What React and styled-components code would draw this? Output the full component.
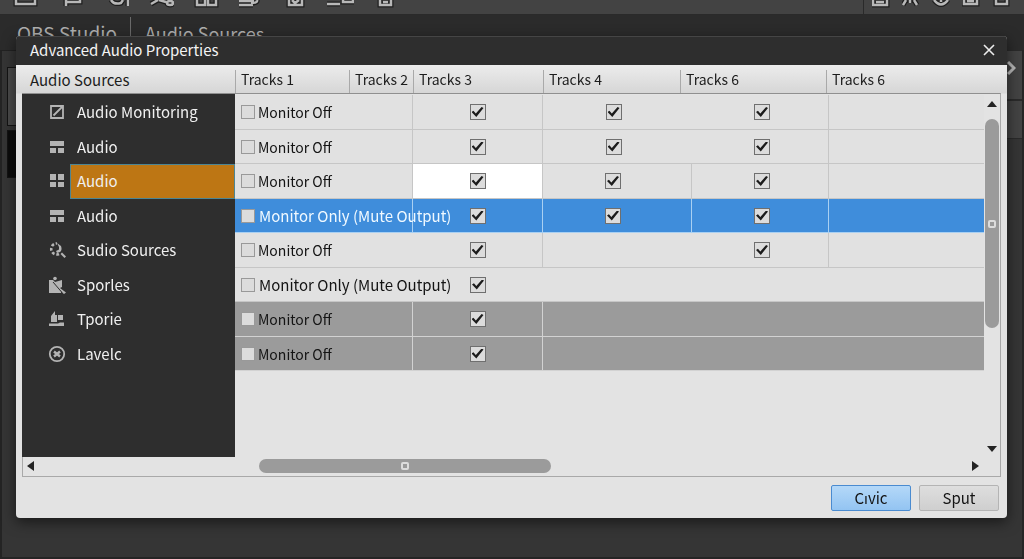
import React, { useState } from "react";
import styled, { createGlobalStyle, css } from "styled-components";

const GlobalStyle = createGlobalStyle`
  * {
    box-sizing: border-box;
  }
  body {
    margin: 0;
    background-color: #353535;
    font-family: "Noto Sans CJK SC", "Noto Sans", sans-serif;
    font-size: 15px;
  }
  button, input {
    font-family: inherit;
  }
`;

/* main window behind the dialog */
const MainWindow = styled.div`
  min-height: 100vh;
  display: flex;
  flex-direction: column;
  background-color: #353535;
  border-bottom: 2px solid #252525;
`;
const Toolbar = styled.div`
  height: 15px;
  display: flex;
  justify-content: space-between;
  background-color: #434343;
  border-bottom: 1px solid #2a2a2a;
  overflow: hidden;
`;
const ToolGroup = styled.div`
  display: flex;
  gap: ${(props) => props.$gap}px;
  padding: 0 13px 0 ${(props) => (props.$divided ? 8 : 11)}px;
  border-left: ${(props) => (props.$divided ? "1px solid #2a2a2a" : "none")};
`;
const WindowTitle = styled.div`
  height: 35px;
  display: flex;
  align-items: center;
  padding-left: 17px;
  background-color: #2b2b2b;
  color: #b0b0b0;
  font-size: 18px;
  line-height: 32px;
`;
const AppName = styled.span`
  padding-right: 13px;
  margin-right: 14px;
  border-right: 1px solid #6a6a6a;
  font-size: 19px;
`;
const Workspace = styled.div`
  flex: 1;
  display: flex;
  justify-content: space-between;
`;
const LeftDock = styled.div`
  width: 32px;
  border-left: 2px solid #242424;
  padding-left: 5px;
  border-top: 1px solid #222222;
`;
const DockBox = styled.div`
  height: ${(props) => props.$height}px;
  margin-top: ${(props) => props.$top}px;
  background-color: ${(props) => props.$color};
  border: 1px solid #141414;
`;
const RightDock = styled.div`
  width: 32px;
  border-right: 2px solid #262626;
`;
const DockRow = styled.div`
  height: ${(props) => props.$height}px;
  display: flex;
  justify-content: flex-end;
  padding: 10px 6px 0 0;
  background-color: #434343;
  border-top: 1px solid #2a2a2a;
  border-bottom: 1px solid #2a2a2a;
`;

/* dialog */
const Overlay = styled.div`
  position: fixed;
  inset: 0;
  display: flex;
  padding: 36px 17px 41px 16px;
`;
const Dialog = styled.section`
  flex: 1;
  display: flex;
  flex-direction: column;
  background-color: #e3e3e3;
  border-radius: 4px;
  box-shadow: 0 4px 14px rgba(0, 0, 0, 0.55);
  overflow: hidden;
`;
const TitleBar = styled.header`
  height: 29px;
  flex-shrink: 0;
  display: flex;
  justify-content: space-between;
  align-items: center;
  padding: 0 10px 2px 14px;
  background-color: #2e2e2e;
  border-top: 1px solid #454545;
`;
const Title = styled.h1`
  margin: 0;
  color: #f4f4f4;
  font-size: 15px;
  font-weight: 400;
  line-height: 24px;
`;
const CloseButton = styled.button`
  width: 16px;
  height: 16px;
  display: flex;
  justify-content: center;
  align-items: center;
  padding: 0;
  border: none;
  background: none;
`;
const Content = styled.div`
  flex: 1;
  display: flex;
  flex-direction: column;
  padding: 0 6px;
  background: linear-gradient(#ececec, #d6d6d6 28px, #e3e3e3 29px);
`;
const Panes = styled.div`
  flex: 1;
  display: flex;
`;
const Side = styled.div`
  width: 213px;
  display: flex;
  flex-direction: column;
`;
const SideTitle = styled.h2`
  height: 29px;
  margin: 0;
  padding-left: 8px;
  border-bottom: 1px solid #8f8f8f;
  color: #1c1c1c;
  font-size: 15px;
  font-weight: 400;
  line-height: 29px;
`;
const SideList = styled.ul`
  flex: 1;
  display: grid;
  grid-template-rows: repeat(8, 1fr);
  margin: 0;
  padding: 1px 0 86px;
  list-style: none;
  background-color: #2e2e2e;
`;
const SideItem = styled.li`
  display: flex;
`;
const SideButton = styled.button`
  width: 100%;
  display: flex;
  align-items: stretch;
  padding: 0 0 0 26px;
  border: none;
  background: none;
  color: #f0f0f0;
  font-size: 15px;
  line-height: 20px;
  text-align: left;
`;
const SideIcon = styled.span`
  width: 22px;
  display: flex;
  align-items: center;
`;
const SideLabel = styled.span`
  flex: 1;
  display: flex;
  align-items: center;
  padding-left: 6px;
  border: 1px solid transparent;
  ${(props) =>
    props.$active &&
    css`
      background-color: #bd7614;
      border-color: #4d8593;
    `}
`;

const TrackTable = styled.table`
  width: 100%;
  table-layout: fixed;
  border-collapse: separate;
  border-spacing: 0;
`;
const TrackBody = styled.tbody`
  &::before {
    content: "";
    display: block;
    height: 1px;
  }
`;
const TablePane = styled.div`
  flex: 1;
  min-width: 0;
`;
const HeadCell = styled.th`
  height: 29px;
  padding: 5px 0 0;
  border-bottom: 1px solid #8f8f8f;
  color: #1c1c1c;
  font-size: 14px;
  font-weight: 400;
  text-align: left;
`;
const HeadText = styled.div`
  height: 23px;
  padding: 0 0 4px 5px;
  border-left: 1px solid #a9a9a9;
  line-height: 19px;
  white-space: nowrap;
`;
const tones = {
  plain: { back: "#e1e1e1", line: "#c6c6c6", text: "#141414" },
  selected: { back: "#3f8ddb", line: "#a9d0f2", text: "#f0f9ff" },
  muted: { back: "#9b9b9b", line: "#d2d2d2", text: "#141414" },
};
const TrackRow = styled.tr`
  height: ${(props) => (props.$odd ? 35 : 34)}px;
  background-color: ${(props) => tones[props.$tone].back};
  color: ${(props) => tones[props.$tone].text};
`;
const TrackCell = styled.td`
  padding: 0 ${(props) => props.$right || 0}px 0 ${(props) => props.$left || 0}px;
  border-bottom: 1px solid ${(props) => tones[props.$tone].line};
  border-right: ${(props) =>
    props.$ruled ? `1px solid ${tones[props.$tone].line}` : "none"};
  background-color: ${(props) => (props.$current ? "#ffffff" : "transparent")};
`;
const MonitorLabel = styled.label`
  display: flex;
  align-items: center;
  gap: ${(props) => (props.$wide ? 4 : 3)}px;
  font-size: ${(props) => (props.$wide ? 15 : 14)}px;
  line-height: 20px;
  white-space: nowrap;
`;
const Check = styled.input.attrs({ type: "checkbox" })`
  appearance: none;
  width: ${(props) => (props.$small ? 14 : 16)}px;
  height: ${(props) => (props.$small ? 14 : 16)}px;
  display: block;
  flex-shrink: 0;
  margin: ${(props) => (props.$small ? "0" : "0 auto")};
  border: 1px solid ${(props) => (props.$small ? "#999999" : "#6f6f6f")};
  background-color: #dcdcdc;
  &:checked::before {
    content: "";
    display: block;
    width: 12px;
    height: 10px;
    margin: 2px 1px;
    background-color: #1c1c1c;
    clip-path: polygon(0 50%, 16% 38%, 36% 66%, 84% 0, 100% 10%, 40% 100%);
  }
`;

const VScroll = styled.div`
  width: 17px;
  display: flex;
  flex-direction: column;
  align-items: center;
  margin-top: 28px;
  padding: 7px 0 5px;
  border-top: 1px solid #8f8f8f;
  border-right: 1px solid #a9a9a9;
`;
const VTrack = styled.div`
  flex: 1;
  width: 14px;
  padding-top: 12px;
`;
const HScroll = styled.div`
  height: 20px;
  display: flex;
  align-items: center;
  padding: 0 21px 2px 4px;
  border: solid #a9a9a9;
  border-width: 0 1px 1px;
`;
const HTrack = styled.div`
  flex: 1;
  padding-left: 225px;
`;
const Thumb = styled.div`
  width: ${(props) => props.$width};
  height: ${(props) => props.$height};
  display: flex;
  justify-content: center;
  align-items: center;
  border-radius: 7px;
  background-color: #9b9b9b;
`;
const Grip = styled.span`
  width: 8px;
  height: 8px;
  border: 2px solid #dddddd;
  border-radius: 2px;
`;
const ArrowButton = styled.button`
  display: flex;
  padding: 0;
  border: none;
  background: none;
`;

const Footer = styled.footer`
  display: flex;
  justify-content: flex-end;
  gap: 8px;
  padding: 8px 8px 7px;
`;
const FooterButton = styled.button`
  width: 80px;
  height: 26px;
  padding: 0;
  border: 1px solid ${(props) => (props.$primary ? "#4a8bd0" : "#b4b4b4")};
  border-radius: 2px;
  background: ${(props) =>
    props.$primary
      ? "linear-gradient(#b4d8f8, #93c4f2)"
      : "linear-gradient(#dedede, #cfcfcf)"};
  color: #141414;
  font-size: 15px;
  line-height: 20px;
`;

const leftTools = [
  "M5 0V4H24V0",
  "M10 0V6M10 2H24V0",
  "M10 0Q13 5 20 3L22 0M27 0V6",
  "M5 4L12 0M13 0L20 2M21 3a3 2 0 1 0 6 0a3 2 0 1 0-6 0",
  "M6 0V5H14V0M17 0V5H25V0",
  "M3 5H17M3 1H18M21 0Q22 3 15 3",
  "M8 0V5H21V0M11 0L14 3L18 0",
  "M1 4H14M17 0V2H27V0",
  "M9 0V5H20V0M12 2H17",
];
const rightTools = [
  "M1 0V5H15V0M4 2H12",
  "M1 5L4 0M8 0V3M12 0L15 5",
  "M2 0Q9 9 16 0M9 0V2",
  "M2 0V4H15V0M5 1H12",
  "M4 0V4H15V0",
];

function ToolIcon({ d, width }) {
  return (
    <svg width={width} height="12" viewBox={`0 0 ${width} 12`} fill="none">
      <path d={d} stroke="#1e1e1e" strokeWidth="5" />
      <path d={d} stroke="#b8b8b8" strokeWidth="2.5" />
    </svg>
  );
}

function Arrow({ d, label, width, height }) {
  return (
    <ArrowButton aria-label={label}>
      <svg width={width} height={height} fill="#242424">
        <path d={d} />
      </svg>
    </ArrowButton>
  );
}

const icons = {
  edit: (
    <path d="M2 2H14V14H2ZM4.5 11.5L13.5 2.5" fill="none" stroke="#b4b4b4" strokeWidth="1.8" />
  ),
  panels: <path d="M1 2H15V7H1ZM1 9H7V14H1ZM9 9H15V14H9Z" />,
  grid: <path d="M1 1H7V7H1ZM9 1H15V7H9ZM1 9H7V14H1ZM9 9H15V14H9Z" />,
  search: (
    <g>
      <path d="M10 12A5.5 5.5 0 1 1 8 1.5" fill="none" stroke="#b4b4b4" strokeWidth="2.6" strokeDasharray="2.8 1.8" />
      <path d="M8 1L12 4Q13.5 8 11 10L8 11L7 9L10 7.5V5ZM11.5 12L13 10.5L17 14.5L15.5 16Z" />
    </g>
  ),
  person: (
    <g>
      <path d="M0 3H4L6 5L13 3V10L11 11L17 15.5L15 17L12 14.5V16H0Z" />
      <circle cx="6" cy="1.5" r="1.8" />
      <path d="M4 5L13 15.5" stroke="#2e2e2e" strokeWidth="1" />
    </g>
  ),
  stamp: <path d="M2 11V5L6 0V4H8V11ZM9 4H14V9H9ZM0 12.5H9L11 11.5H15V15H0Z" />,
  cancel: (
    <g fill="none" stroke="#b4b4b4">
      <circle cx="8" cy="8" r="7.2" strokeWidth="1.8" />
      <path d="M5 5.5L11 10.5M11 5.5L5 10.5" strokeWidth="2.4" />
    </g>
  ),
};

const sources = [
  { name: "Audio Monitoring", icon: "edit" },
  { name: "Audio", icon: "panels" },
  { name: "Audio", icon: "grid" },
  { name: "Audio", icon: "panels" },
  { name: "Sudio Sources", icon: "search" },
  { name: "Sporles", icon: "person" },
  { name: "Tporie", icon: "stamp" },
  { name: "Lavelc", icon: "cancel" },
];

const OFF = "Monitor Off";
const ONLY = "Monitor Only (Mute Output)";

// checks: ticked tracks 3, 4, 6; rules: columns that end in a line
const rows = [
  { mode: OFF, tone: "plain", checks: [1, 1, 1], rules: [1, 1, 0, 1] },
  { mode: OFF, tone: "plain", checks: [1, 1, 1], rules: [1, 1, 0, 1] },
  { mode: OFF, tone: "plain", checks: [1, 1, 1], rules: [1, 1, 1, 1] },
  { mode: ONLY, tone: "selected", checks: [1, 1, 1], rules: [1, 1, 1, 1] },
  { mode: OFF, tone: "plain", checks: [1, 0, 1], rules: [0, 1, 0, 1] },
  { mode: ONLY, tone: "plain", checks: [1, 0, 0], rules: [0, 0, 0, 0] },
  { mode: OFF, tone: "muted", checks: [1, 0, 0], rules: [1, 1, 0, 0] },
  { mode: OFF, tone: "muted", checks: [1, 0, 0], rules: [1, 1, 0, 0] },
];

function SourceList() {
  const [active, setActive] = useState(2);
  return (
    <Side>
      <SideTitle>Audio Sources</SideTitle>
      <SideList>
        {sources.map((source, i) => (
          <SideItem key={i}>
            <SideButton onClick={() => setActive(i)}>
              <SideIcon>
                <svg width="18" height="18" viewBox="-1 -1 18 18" fill="#b4b4b4">
                  {icons[source.icon]}
                </svg>
              </SideIcon>
              <SideLabel $active={active === i}>{source.name}</SideLabel>
            </SideButton>
          </SideItem>
        ))}
      </SideList>
    </Side>
  );
}

function Tracks() {
  return (
    <TablePane>
      <TrackTable>
        <colgroup>
          <col width="114" />
          <col width="64" />
          <col width="130" />
          <col width="137" />
          <col width="12" />
          <col width="134" />
          <col width="3" />
          <col />
        </colgroup>
        <thead>
          <tr>
            <HeadCell><HeadText>Tracks 1</HeadText></HeadCell>
            <HeadCell><HeadText>Tracks 2</HeadText></HeadCell>
            <HeadCell><HeadText>Tracks 3</HeadText></HeadCell>
            <HeadCell><HeadText>Tracks 4</HeadText></HeadCell>
            <HeadCell colSpan={2}><HeadText>Tracks 6</HeadText></HeadCell>
            <HeadCell colSpan={2}><HeadText>Tracks 6</HeadText></HeadCell>
          </tr>
        </thead>
        <TrackBody>
          {rows.map((row, i) => (
            <TrackRow key={i} $tone={row.tone} $odd={i % 2 === 0}>
              <TrackCell colSpan={2} $tone={row.tone} $ruled={row.rules[0]} $left={6}>
                <MonitorLabel $wide={row.mode === ONLY}>
                  <Check $small />
                  {row.mode}
                </MonitorLabel>
              </TrackCell>
              <TrackCell $tone={row.tone} $ruled={row.rules[1]} $current={i === 2}>
                {!!row.checks[0] && <Check defaultChecked aria-label="Track 3" />}
              </TrackCell>
              <TrackCell colSpan={2} $tone={row.tone} $ruled={row.rules[2]} $right={8}>
                {!!row.checks[1] && <Check defaultChecked aria-label="Track 4" />}
              </TrackCell>
              <TrackCell colSpan={2} $tone={row.tone} $ruled={row.rules[3]} $left={4}>
                {!!row.checks[2] && <Check defaultChecked aria-label="Track 6" />}
              </TrackCell>
              <TrackCell $tone={row.tone} />
            </TrackRow>
          ))}
        </TrackBody>
      </TrackTable>
    </TablePane>
  );
}

function App() {
  return (
    <>
      <GlobalStyle />
      <MainWindow>
        <Toolbar>
          <ToolGroup $gap={17}>
            {leftTools.map((d) => (
              <ToolIcon key={d} d={d} width={28} />
            ))}
          </ToolGroup>
          <ToolGroup $gap={11} $divided>
            {rightTools.map((d) => (
              <ToolIcon key={d} d={d} width={19} />
            ))}
          </ToolGroup>
        </Toolbar>
        <WindowTitle>
          <AppName>OBS Studio</AppName>
          <span>Audio Sources</span>
        </WindowTitle>
        <Workspace>
          <LeftDock>
            <DockBox $height={59} $top={16} $color="#4a4a4a" />
            <DockBox $height={48} $top={4} $color="#0c0c0c" />
          </LeftDock>
          <RightDock>
            <DockRow $height={50}>
              <svg width="9" height="14" fill="none" stroke="#b8b8b8" strokeWidth="3">
                <path d="M1 1L7 7L1 13" />
              </svg>
            </DockRow>
            <DockRow $height={39} />
          </RightDock>
        </Workspace>
      </MainWindow>

      <Overlay>
        <Dialog role="dialog" aria-labelledby="dialog-title">
          <TitleBar>
            <Title id="dialog-title">Advanced Audio Properties</Title>
            <CloseButton aria-label="Close">
              <svg width="12" height="12" stroke="#ececec" strokeWidth="1.6">
                <path d="M1 1L11 11M11 1L1 11" />
              </svg>
            </CloseButton>
          </TitleBar>
          <Content>
            <Panes>
              <SourceList />
              <Tracks />
              <VScroll>
                <Arrow label="Scroll up" width={10} height={6} d="M0 6L5 0L10 6Z" />
                <VTrack>
                  <Thumb $width="14px" $height="64%">
                    <Grip />
                  </Thumb>
                </VTrack>
                <Arrow label="Scroll down" width={10} height={6} d="M0 0L5 6L10 0Z" />
              </VScroll>
            </Panes>
            <HScroll>
              <Arrow label="Scroll left" width={7} height={10} d="M7 0L0 5L7 10Z" />
              <HTrack>
                <Thumb $width="41%" $height="14px">
                  <Grip />
                </Thumb>
              </HTrack>
              <Arrow label="Scroll right" width={7} height={10} d="M0 0L7 5L0 10Z" />
            </HScroll>
          </Content>
          <Footer>
            <FooterButton $primary>Cıvic</FooterButton>
            <FooterButton>Sput</FooterButton>
          </Footer>
        </Dialog>
      </Overlay>
    </>
  );
}

export default App;
